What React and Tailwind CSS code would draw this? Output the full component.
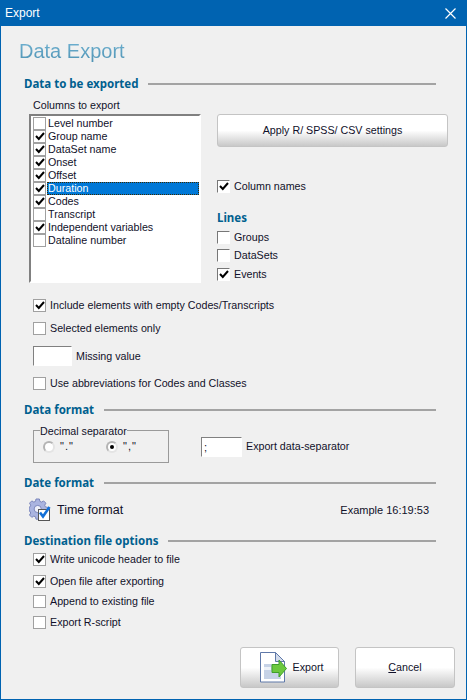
import React from 'react'

const font = { fontFamily: '"Liberation Sans", sans-serif' }
const headFont = { fontFamily: '"Noto Sans", sans-serif' }

function Check({ checked, sunken }) {
  return (
    <span className={`w-[13px] h-[13px] shrink-0 flex items-center justify-center bg-white border ${sunken ? 'border-[#777] border-r-white border-b-white' : 'border-[#a0a0a0]'}`}>
      {checked && (
        <svg width="10" height="9" viewBox="0 0 10 9">
          <path d="M1 4 L3.8 7 L9 1" fill="none" stroke="#000" strokeWidth="2" />
        </svg>
      )}
    </span>
  )
}

function CheckRow({ label, checked, sunken, className = '' }) {
  return (
    <div className={`flex items-center h-[14px] ${className}`}>
      <Check checked={checked} sunken={sunken} />
      <span className="ml-[4px] text-[10.7px] text-[#10102a] whitespace-nowrap">{label}</span>
    </div>
  )
}

function Section({ title, className = '' }) {
  return (
    <div className={`flex items-center pl-[23px] h-[14px] ${className}`}>
      <span style={headFont} className="text-[11.5px] font-bold text-[#00608f] whitespace-nowrap">{title}</span>
      <span className="flex-1 h-[2px] ml-[10px] mr-[30px] bg-[#a3a3a3]" />
    </div>
  )
}

function Radio({ on }) {
  return (
    <span className="w-[12px] h-[12px] shrink-0 rounded-full bg-white border-2 border-[#b4b4b4] border-r-[#e4e4e4] border-b-[#e4e4e4] flex items-center justify-center">
      {on && <span className="w-[4px] h-[4px] rounded-full bg-black" />}
    </span>
  )
}

function GearIcon() {
  return (
    <svg width="23" height="24" viewBox="0 0 23 24">
      <path d="M7 1h3.4l.5 2.4 1.7.7 2-1.2 2.3 2.3-1.2 2 .7 1.7 2.4.5v3.4l-2.4.5-.7 1.7 1.2 2-2.3 2.3-2-1.2-1.7.7-.5 2.4H7l-.5-2.4-1.7-.7-2 1.2L.5 17l1.2-2-.7-1.7-1-.5V9.4l1-.5.7-1.7-1.2-2 2.3-2.3 2 1.2 1.7-.7z" fill="#aab4e0" stroke="#7b86bc" strokeWidth="1" />
      <circle cx="8.7" cy="11" r="3.6" fill="#eef0fa" stroke="#7b86bc" />
      <rect x="9.5" y="11.5" width="11" height="11" fill="#fff" stroke="#555" />
      <path d="M11 14.5l3 4 6.5-9.5" fill="none" stroke="#1270d8" strokeWidth="2.6" />
    </svg>
  )
}

function ExportIcon() {
  return (
    <svg width="28" height="31" viewBox="0 0 28 31">
      <path d="M.5 .5h15l9 9v20.5H.5z" fill="#fff" stroke="#5f78a8" />
      <path d="M15.5 .5v9h9z" fill="#d3dcec" stroke="#5f78a8" />
      <rect x="4" y="12" width="17" height="15" fill="#c6d2e6" />
      <rect x="4" y="15" width="7" height="3" fill="#eef2f8" />
      <path d="M12 12.5h7v-4.5l7.5 8.5-7.5 8.5v-4.5h-7z" fill="#6cc83e" stroke="#3f9f2a" />
    </svg>
  )
}

function App() {
  const columns = [
    ['Level number', false],
    ['Group name', true],
    ['DataSet name', true],
    ['Onset', true],
    ['Offset', true],
    ['Duration', true],
    ['Codes', true],
    ['Transcript', false],
    ['Independent variables', true],
    ['Dataline number', false],
  ]
  const btn = 'rounded-[3px] border border-[#c4c4c4] bg-gradient-to-b from-white from-50% to-[#c8c8c8] text-[10.7px] text-[#10102a] flex items-center justify-center'

  return (
    <div style={font} className="w-[467px] h-[700px] bg-[#f0f0f0] border border-[#0063b1] border-t-0 overflow-hidden flex flex-col">
      {/* Title bar */}
      <div className="h-[26px] shrink-0 -mx-px bg-[#0063b1] flex items-center justify-between pl-[5px] pr-[11px]">
        <span className="text-[12px] text-white">Export</span>
        <svg width="11" height="11" viewBox="0 0 11 11">
          <path d="M.5 .5l10 10M10.5 .5l-10 10" stroke="#fff" strokeWidth="1.2" />
        </svg>
      </div>

      <h1 className="ml-[18px] mt-[11px] h-[28px] leading-[28px] text-[20px] w-fit bg-gradient-to-b from-[#74b6d6] to-[#4a8fb0] bg-clip-text text-transparent">Data Export</h1>

      <Section title="Data to be exported" className="mt-[12px]" />

      <div className="flex mt-[7px]">
        {/* Columns list */}
        <div className="ml-[28px] w-[172px]">
          <div className="h-[14px] flex items-center pl-[4px] text-[10.7px] text-[#10102a]">Columns to export</div>
          <div className="mt-[2px] h-[169px] bg-white border-2 border-[#808080] border-r-white border-b-white pt-px pl-[2px]">
            {columns.map(([name, on]) => (
              <div key={name} className="flex items-center h-[13px]">
                <Check checked={on} />
                <span className={`ml-px flex-1 h-[13px] leading-[13px] pl-[1px] text-[10.7px] ${name === 'Duration' ? 'bg-[#0078d7] text-white outline-1 -outline-offset-1 outline-dotted outline-[#3a2a00]' : 'text-[#10102a]'}`}>{name}</span>
              </div>
            ))}
          </div>
        </div>

        {/* Right side options */}
        <div className="ml-[16px] w-[231px] pt-[16px]">
          <div className={`${btn} h-[33px]`}>Apply R/ SPSS/ CSV settings</div>
          <CheckRow label="Column names" checked sunken className="mt-[32px]" />
          <div style={headFont} className="mt-[18px] h-[14px] flex items-center text-[11.5px] font-bold text-[#00608f]">Lines</div>
          <CheckRow label="Groups" sunken className="mt-[5px]" />
          <CheckRow label="DataSets" sunken className="mt-[4px]" />
          <CheckRow label="Events" checked sunken className="mt-[5px]" />
        </div>
      </div>

      <div className="ml-[32px] mt-[15px]">
        <CheckRow label="Include elements with empty Codes/Transcripts" checked />
        <CheckRow label="Selected elements only" className="mt-[9px]" />
        <div className="flex items-center mt-[11px]">
          <span className="w-[39px] h-[20px] bg-white border border-[#808080] border-r-white border-b-white" />
          <span className="ml-[4px] text-[10.7px] text-[#10102a]">Missing value</span>
        </div>
        <CheckRow label="Use abbreviations for Codes and Classes" className="mt-[10px]" />
      </div>

      <Section title="Data format" className="mt-[13px]" />

      <div className="flex items-center mt-[13px] ml-[32px]">
        <div className="relative w-[136px] h-[33px] border border-[#9a9a9a] flex items-center pl-[9px]">
          <span className="absolute -top-[6px] left-[6px] bg-[#f0f0f0] text-[10.7px] leading-[12px] text-[#10102a]">Decimal separator</span>
          <Radio />
          <span className="ml-[5px] w-[46px] text-[11px] tracking-[1px] text-[#10102a]">"."</span>
          <Radio on />
          <span className="ml-[5px] text-[11px] tracking-[1px] text-[#10102a]">","</span>
        </div>
        <span className="ml-[32px] w-[41px] h-[20px] bg-white border border-[#808080] border-r-white border-b-white text-[11px] leading-[18px] pl-[2px] text-[#10102a]">;</span>
        <span className="ml-[4px] text-[10.7px] text-[#10102a]">Export data-separator</span>
      </div>

      <Section title="Date format" className="mt-[13px]" />

      <div className="flex items-center mt-[8px] ml-[28px] h-[24px]">
        <GearIcon />
        <span className="ml-[5px] text-[12.5px] text-[#10102a]">Time format</span>
        <span className="ml-[auto] mr-[37px] text-[11px] text-[#10102a]">Example 16:19:53</span>
      </div>

      <Section title="Destination file options" className="mt-[12px]" />

      <div className="ml-[32px] mt-[4px]">
        <CheckRow label="Write unicode header to file" checked />
        <CheckRow label="Open file after exporting" checked className="mt-[8px]" />
        <CheckRow label="Append to existing file" className="mt-[6px]" />
        <CheckRow label="Export R-script" className="mt-[7px]" />
      </div>

      {/* Footer buttons */}
      <div className="flex justify-end gap-[16px] mt-[18px] mr-[11px]">
        <div className={`${btn} w-[99px] h-[41px] gap-[5px] pl-[4px]`}>
          <ExportIcon />
          <span>Export</span>
        </div>
        <div className={`${btn} w-[100px] h-[41px]`}>
          <span><span className="underline">C</span>ancel</span>
        </div>
      </div>
    </div>
  )
}

export default App
